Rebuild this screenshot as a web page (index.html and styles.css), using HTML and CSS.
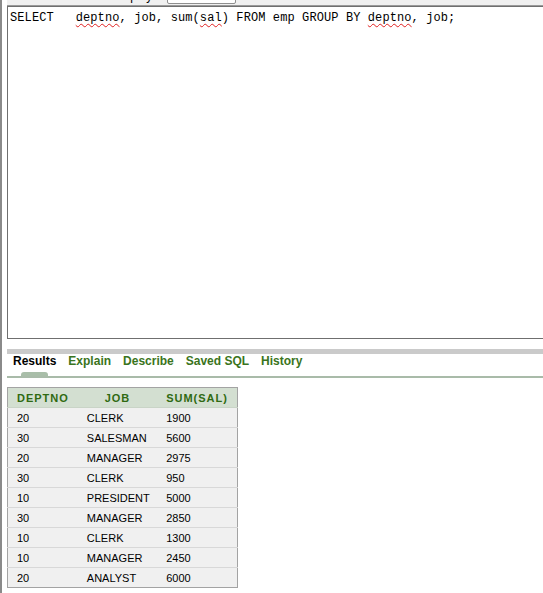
FILE: index.html
```html
<!DOCTYPE html>
<html>
<head>
<meta charset="utf-8">
<link rel="stylesheet" href="styles.css">
</head>
<body>
<div class="page">
  <div class="main">
    <div class="topbar">
      <span class="top-label">Display</span>
      <span class="top-input"></span>
    </div>
    <div class="editor"><span class="sql">SELECT   <span class="spell">deptno</span>, job, sum(<span class="spell">sal</span>) FROM emp GROUP BY <span class="spell">deptno</span>, job;</span></div>
    <div class="splitter"></div>
    <div class="tabs">
      <span class="tab active">Results</span>
      <span class="tab">Explain</span>
      <span class="tab">Describe</span>
      <span class="tab">Saved SQL</span>
      <span class="tab">History</span>
    </div>
    <table class="results">
      <colgroup><col class="c1"><col class="c2"><col class="c3"></colgroup>
      <thead>
        <tr><th>DEPTNO</th><th>JOB</th><th>SUM(SAL)</th></tr>
      </thead>
      <tbody>
        <tr><td>20</td><td>CLERK</td><td>1900</td></tr>
        <tr><td>30</td><td>SALESMAN</td><td>5600</td></tr>
        <tr><td>20</td><td>MANAGER</td><td>2975</td></tr>
        <tr><td>30</td><td>CLERK</td><td>950</td></tr>
        <tr><td>10</td><td>PRESIDENT</td><td>5000</td></tr>
        <tr><td>30</td><td>MANAGER</td><td>2850</td></tr>
        <tr><td>10</td><td>CLERK</td><td>1300</td></tr>
        <tr><td>10</td><td>MANAGER</td><td>2450</td></tr>
        <tr><td>20</td><td>ANALYST</td><td>6000</td></tr>
      </tbody>
    </table>
  </div>
</div>
</body>
</html>
```
FILE: styles.css
```css
html, body {
  margin: 0;
  padding: 0;
  background: #ffffff;
  font-family: "Liberation Sans", Arial, sans-serif;
}

.page {
  height: 593px;
  overflow: hidden;
  border-left: 2px solid #8a8a8a;
}

.main {
  padding-left: 5px;
  overflow: hidden;
}

.topbar {
  height: 5px;
  background: #f0f0f0;
  border-bottom: 1px solid #9a9a9a;
  display: flex;
  align-items: flex-end;
  overflow: hidden;
}

.top-label {
  margin-left: 106px;
  margin-bottom: 2px;
  font-size: 12px;
  line-height: 14px;
  height: 14px;
  color: #000;
  flex: none;
}

.top-input {
  margin-left: 15px;
  width: 67px;
  height: 8px;
  align-self: flex-end;
  margin-bottom: 1px;
  background: #fff;
  border: 1px solid #8f8f8f;
  border-radius: 0 0 2px 2px;
  flex: none;
}

.editor {
  height: 323px;
  border: 1px solid #6f6f6f;
  border-right: none;
  padding: 3px 2px 5px 2px;
  font-family: "Liberation Mono", "DejaVu Sans Mono", monospace;
  font-size: 12px;
  line-height: 16px;
  letter-spacing: 0.1px;
  color: #000;
  white-space: pre;
}

.spell {
  text-decoration: underline wavy #e02020;
  text-decoration-thickness: 1px;
  text-underline-offset: 2px;
}

.splitter {
  margin-top: 10px;
  height: 5px;
  background: #cacaca;
}

.tabs {
  display: flex;
  gap: 12px;
  padding: 0 0 8px 6px;
  border-bottom: 2px solid #a9bba9;
  font-size: 12px;
  line-height: 14px;
  font-weight: bold;
}

.tab {
  color: #3a7420;
  position: relative;
}

.tab.active {
  color: #000;
}

.tab.active::after {
  content: "";
  position: absolute;
  left: 8px;
  width: 27px;
  bottom: -8px;
  height: 4px;
  background: #a9bea9;
  border-radius: 3px 3px 0 0;
}

.results {
  margin-top: 9px;
  border-collapse: collapse;
  border: 1px solid #a3a3a3;
  table-layout: fixed;
  width: 231px;
  font-size: 11px;
}

.c1 { width: 70px; }
.c2 { width: 79px; }
.c3 { width: 80px; }

.results th {
  height: 19px;
  padding: 0;
  background: #d3dfd1;
  color: #2f6a12;
  font-weight: bold;
  letter-spacing: 1px;
  text-align: center;
  border-bottom: 1px solid #c9d4c7;
}

.results td {
  height: 19px;
  padding: 0 0 0 9px;
  background: #f0f0f0;
  color: #000;
  border-top: 1px solid #d8d8d8;
  white-space: nowrap;
}
```
